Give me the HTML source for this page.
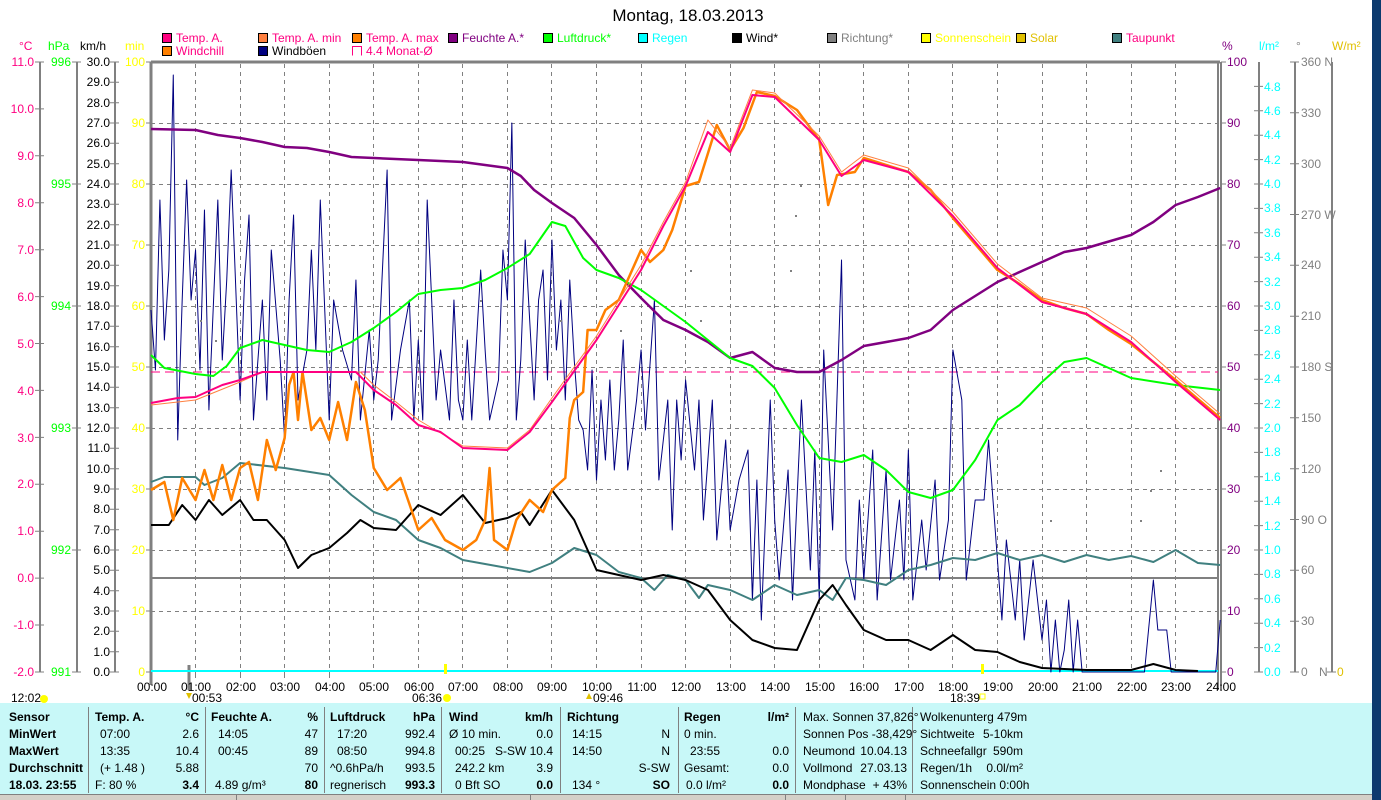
<!DOCTYPE html>
<html><head><meta charset="utf-8"><style>
html,body{margin:0;padding:0;background:#fff;width:1381px;height:800px;overflow:hidden}
svg{display:block}
text{font-family:"Liberation Sans Narrow","Liberation Sans",sans-serif;font-size:12px}
.b{font-weight:bold}
</style></head><body>
<svg width="1381" height="800" xmlns="http://www.w3.org/2000/svg">
<rect x="0" y="0" width="1381" height="800" fill="#fff"/>
<rect x="1372" y="0" width="9" height="800" fill="#0c3a6e"/>
<text x="688" y="21" text-anchor="middle" style="font-size:17px">Montag, 18.03.2013</text>

<!-- legend -->
<g stroke="#000" stroke-width="1">
<rect x="162.5" y="33.5" width="9" height="9" fill="#ff0080"/>
<rect x="258.5" y="33.5" width="9" height="9" fill="#ff8040"/>
<rect x="352.5" y="33.5" width="9" height="9" fill="#ff8000"/>
<rect x="448.5" y="33.5" width="9" height="9" fill="#800080"/>
<rect x="543.5" y="33.5" width="9" height="9" fill="#00ff00"/>
<rect x="638.5" y="33.5" width="9" height="9" fill="#00ffff"/>
<rect x="732.5" y="33.5" width="9" height="9" fill="#000"/>
<rect x="827.5" y="33.5" width="9" height="9" fill="#808080"/>
<rect x="921.5" y="33.5" width="9" height="9" fill="#ffff00"/>
<rect x="1016.5" y="33.5" width="9" height="9" fill="#e0c000"/>
<rect x="1112.5" y="33.5" width="9" height="9" fill="#408080"/>
<rect x="162.5" y="46.5" width="9" height="9" fill="#ff8000"/>
<rect x="258.5" y="46.5" width="9" height="9" fill="#000080"/>
</g>
<path d="M352.5 55.5V46.5H361.5V55.5" fill="none" stroke="#ff0080"/>
<g style="font-size:12px">
<text x="176" y="42" fill="#ff0080">Temp. A.</text>
<text x="272" y="42" fill="#ff0080">Temp. A. min</text>
<text x="366" y="42" fill="#ff0080">Temp. A. max</text>
<text x="462" y="42" fill="#800080">Feuchte A.*</text>
<text x="557" y="42" fill="#00ff00">Luftdruck*</text>
<text x="652" y="42" fill="#00ffff">Regen</text>
<text x="746" y="42" fill="#000">Wind*</text>
<text x="841" y="42" fill="#808080">Richtung*</text>
<text x="935" y="42" fill="#ffff00">Sonnenschein</text>
<text x="1030" y="42" fill="#e0c000">Solar</text>
<text x="1126" y="42" fill="#ff0080">Taupunkt</text>
<text x="176" y="55" fill="#ff0080">Windchill</text>
<text x="272" y="55" fill="#000">Windböen</text>
<text x="366" y="55" fill="#ff0080">4.4 Monat-Ø</text>
</g>
<!-- axis titles -->
<g style="font-size:12px">
<text x="19" y="50" fill="#ff0080">°C</text>
<text x="48" y="50" fill="#00ff00">hPa</text>
<text x="80" y="50" fill="#000">km/h</text>
<text x="125" y="50" fill="#ffff00">min</text>
<text x="1222" y="50" fill="#800080">%</text>
<text x="1259" y="50" fill="#00ffff">l/m²</text>
<text x="1296" y="50" fill="#808080">°</text>
<text x="1332" y="50" fill="#e0c000">W/m²</text>
</g>

<!-- grid -->
<g stroke="#808080" stroke-width="1" stroke-dasharray="4,4" fill="none">
<path d="M151 123.5H1218M151 184.5H1218M151 245.5H1218M151 306.5H1218M151 367.5H1218M151 428.5H1218M151 489.5H1218M151 550.5H1218M151 611.5H1218"/>
<path d="M195.5 64V672M240.5 64V672M284.5 64V672M329.5 64V672M373.5 64V672M418.5 64V672M462.5 64V672M507.5 64V672M551.5 64V672M596.5 64V672M641.5 64V672M685.5 64V672M730.5 64V672M774.5 64V672M819.5 64V672M863.5 64V672M908.5 64V672M952.5 64V672M997.5 64V672M1042.5 64V672M1086.5 64V672M1131.5 64V672M1175.5 64V672"/>
</g>
<!-- axes -->
<g stroke="#808080" fill="none">
<path d="M151 62H1220" stroke-width="3"/>
<path d="M151 62V685" stroke-width="3"/>
<path d="M1218 62V690M1221 62V690" stroke-width="2"/>
<path d="M40 62V672M77 62V672M115 62V672M1259 62V672M1295 62V672M1332 62V672" stroke-width="2"/>
<path d="M151 578H1218" stroke-width="2"/>
<path d="M189 665V690" stroke-width="3"/>
</g>
<path d="M151 372H1218" stroke="#ff0080" stroke-dasharray="9,5" stroke-width="1"/>
<rect x="151" y="670" width="1067" height="2" fill="#00ffff"/>

<!-- ticks -->
<g stroke="#808080" stroke-width="1">
<path d="M35 62H44M35 108.9H44M35 155.8H44M35 202.8H44M35 249.7H44M35 296.6H44M35 343.5H44M35 390.4H44M35 437.4H44M35 484.3H44M35 531.2H44M35 578.1H44M35 625H44M35 672H44"/>
<path d="M72 62H81M72 184H81M72 306H81M72 428H81M72 550H81M72 672H81"/>
<path d="M110 62H119M110 82.3H119M110 102.7H119M110 123H119M110 143.3H119M110 163.7H119M110 184H119M110 204.3H119M110 224.7H119M110 245H119M110 265.3H119M110 285.7H119M110 306H119M110 326.3H119M110 346.7H119M110 367H119M110 387.3H119M110 407.7H119M110 428H119M110 448.3H119M110 468.7H119M110 489H119M110 509.3H119M110 529.7H119M110 550H119M110 570.3H119M110 590.7H119M110 611H119M110 631.3H119M110 651.7H119M110 672H119"/>
<path d="M146 62H151M146 123H151M146 184H151M146 245H151M146 306H151M146 367H151M146 428H151M146 489H151M146 550H151M146 611H151M146 672H151"/>
<path d="M1221 62H1226M1221 123H1226M1221 184H1226M1221 245H1226M1221 306H1226M1221 367H1226M1221 428H1226M1221 489H1226M1221 550H1226M1221 611H1226M1221 672H1226"/>
<path d="M1254 86.4H1263M1254 110.8H1263M1254 135.2H1263M1254 159.6H1263M1254 184H1263M1254 208.4H1263M1254 232.8H1263M1254 257.2H1263M1254 281.6H1263M1254 306H1263M1254 330.4H1263M1254 354.8H1263M1254 379.2H1263M1254 403.6H1263M1254 428H1263M1254 452.4H1263M1254 476.8H1263M1254 501.2H1263M1254 525.6H1263M1254 550H1263M1254 574.4H1263M1254 598.8H1263M1254 623.2H1263M1254 647.6H1263M1254 672H1263"/>
<path d="M1290 62H1299M1290 112.8H1299M1290 163.7H1299M1290 214.5H1299M1290 265.3H1299M1290 316.2H1299M1290 367H1299M1290 417.8H1299M1290 468.7H1299M1290 519.5H1299M1290 570.3H1299M1290 621.2H1299M1290 672H1299"/>
<path d="M1327 672H1336M151 672V685M195.5 672V678M240.5 672V678M284.5 672V678M329.5 672V678"/>
</g>

<!-- left labels -->
<g fill="#ff0080" text-anchor="end">
<text x="34" y="66">11.0</text><text x="34" y="113">10.0</text><text x="34" y="160">9.0</text><text x="34" y="207">8.0</text><text x="34" y="254">7.0</text><text x="34" y="301">6.0</text><text x="34" y="348">5.0</text><text x="34" y="395">4.0</text><text x="34" y="442">3.0</text><text x="34" y="488">2.0</text><text x="34" y="535">1.0</text><text x="34" y="582">0.0</text><text x="34" y="629">-1.0</text><text x="34" y="676">-2.0</text>
</g>
<g fill="#00ff00" text-anchor="end">
<text x="71" y="66">996</text><text x="71" y="188">995</text><text x="71" y="310">994</text><text x="71" y="432">993</text><text x="71" y="554">992</text><text x="71" y="676">991</text>
</g>
<g fill="#000" text-anchor="end">
<text x="110" y="66">30.0</text><text x="110" y="86">29.0</text><text x="110" y="107">28.0</text><text x="110" y="127">27.0</text><text x="110" y="147">26.0</text><text x="110" y="168">25.0</text><text x="110" y="188">24.0</text><text x="110" y="208">23.0</text><text x="110" y="229">22.0</text><text x="110" y="249">21.0</text><text x="110" y="269">20.0</text><text x="110" y="290">19.0</text><text x="110" y="310">18.0</text><text x="110" y="330">17.0</text><text x="110" y="351">16.0</text><text x="110" y="371">15.0</text><text x="110" y="391">14.0</text><text x="110" y="412">13.0</text><text x="110" y="432">12.0</text><text x="110" y="452">11.0</text><text x="110" y="473">10.0</text><text x="110" y="493">9.0</text><text x="110" y="513">8.0</text><text x="110" y="534">7.0</text><text x="110" y="554">6.0</text><text x="110" y="574">5.0</text><text x="110" y="595">4.0</text><text x="110" y="615">3.0</text><text x="110" y="635">2.0</text><text x="110" y="656">1.0</text><text x="110" y="676">0.0</text>
</g>
<g fill="#ffff00" text-anchor="end">
<text x="145" y="66">100</text><text x="145" y="127">90</text><text x="145" y="188">80</text><text x="145" y="249">70</text><text x="145" y="310">60</text><text x="145" y="371">50</text><text x="145" y="432">40</text><text x="145" y="493">30</text><text x="145" y="554">20</text><text x="145" y="615">10</text><text x="145" y="676">0</text>
</g>
<!-- right labels -->
<g fill="#800080">
<text x="1227" y="66">100</text><text x="1227" y="127">90</text><text x="1227" y="188">80</text><text x="1227" y="249">70</text><text x="1227" y="310">60</text><text x="1227" y="371">50</text><text x="1227" y="432">40</text><text x="1227" y="493">30</text><text x="1227" y="554">20</text><text x="1227" y="615">10</text><text x="1227" y="676">0</text>
</g>
<g fill="#00ffff">
<text x="1264" y="91">4.8</text><text x="1264" y="115">4.6</text><text x="1264" y="139">4.4</text><text x="1264" y="164">4.2</text><text x="1264" y="188">4.0</text><text x="1264" y="212">3.8</text><text x="1264" y="237">3.6</text><text x="1264" y="261">3.4</text><text x="1264" y="286">3.2</text><text x="1264" y="310">3.0</text><text x="1264" y="334">2.8</text><text x="1264" y="359">2.6</text><text x="1264" y="383">2.4</text><text x="1264" y="408">2.2</text><text x="1264" y="432">2.0</text><text x="1264" y="456">1.8</text><text x="1264" y="481">1.6</text><text x="1264" y="505">1.4</text><text x="1264" y="530">1.2</text><text x="1264" y="554">1.0</text><text x="1264" y="578">0.8</text><text x="1264" y="603">0.6</text><text x="1264" y="627">0.4</text><text x="1264" y="652">0.2</text><text x="1264" y="676">0.0</text>
</g>
<g fill="#808080">
<text x="1301" y="66">360 N</text><text x="1301" y="117">330</text><text x="1301" y="168">300</text><text x="1301" y="219">270 W</text><text x="1301" y="269">240</text><text x="1301" y="320">210</text><text x="1301" y="371">180 S</text><text x="1301" y="422">150</text><text x="1301" y="473">120</text><text x="1301" y="524">90 O</text><text x="1301" y="574">60</text><text x="1301" y="625">30</text><text x="1301" y="676">0</text><text x="1319" y="676">N</text>
</g>
<text x="1337" y="676" fill="#e0c000">0</text>

<!-- time labels -->
<g fill="#000" text-anchor="middle">
<text x="152" y="691">00:00</text><text x="196" y="691">01:00</text><text x="241" y="691">02:00</text><text x="285" y="691">03:00</text><text x="330" y="691">04:00</text><text x="374" y="691">05:00</text><text x="419" y="691">06:00</text><text x="463" y="691">07:00</text><text x="508" y="691">08:00</text><text x="552" y="691">09:00</text><text x="597" y="691">10:00</text><text x="642" y="691">11:00</text><text x="686" y="691">12:00</text><text x="731" y="691">13:00</text><text x="775" y="691">14:00</text><text x="820" y="691">15:00</text><text x="864" y="691">16:00</text><text x="909" y="691">17:00</text><text x="953" y="691">18:00</text><text x="998" y="691">19:00</text><text x="1043" y="691">20:00</text><text x="1087" y="691">21:00</text><text x="1132" y="691">22:00</text><text x="1176" y="691">23:00</text><text x="1221" y="691">24:00</text>
</g>
<g fill="#000">
<text x="11" y="702">12:02</text><text x="192" y="702">00:53</text><text x="412" y="702">06:36</text><text x="593" y="702">09:46</text><text x="950" y="702">18:39</text>
</g>
<circle cx="44" cy="699" r="4" fill="#ffff00"/>
<circle cx="447" cy="698" r="4" fill="#ffff00"/>
<rect x="980" y="694" width="5" height="5" fill="none" stroke="#ffff00"/>
<path d="M186 693l3 6 3-6z" fill="#e0c000"/>
<path d="M586 699l3-6 3 6z" fill="#e0c000"/>
<rect x="444" y="664" width="3" height="10" fill="#ffff00"/>
<rect x="981" y="664" width="3" height="10" fill="#ffff00"/>

<!-- data curves: x in hours -->
<g transform="translate(151,0) scale(44.55,1)" fill="none" stroke-linejoin="round">
<polyline vector-effect="non-scaling-stroke" stroke="#000080" stroke-width="1" points="0,310 0.1,370 0.2,200 0.3,340 0.4,270 0.5,75 0.6,440 0.7,300 0.8,180 0.9,300 1,250 1.1,370 1.2,210 1.3,410 1.5,200 1.6,360 1.7,280 1.8,170 2,400 2.1,280 2.2,215 2.3,420 2.5,300 2.6,400 2.7,250 2.9,360 3,440 3.1,300 3.2,215 3.3,400 3.5,350 3.6,250 3.7,350 3.8,200 4,420 4.1,300 4.3,350 4.5,380 4.6,280 4.7,420 4.9,330 5,400 5.1,360 5.3,170 5.4,420 5.6,350 5.8,300 5.9,420 6,340 6.1,420 6.2,200 6.4,400 6.5,350 6.7,420 6.8,300 6.9,400 7,420 7.1,340 7.2,420 7.4,270 7.5,350 7.6,420 7.8,380 7.9,250 8,300 8.1,123 8.2,420 8.3,360 8.4,240 8.6,400 8.7,300 8.8,270 8.9,380 9,240 9.1,350 9.2,300 9.3,400 9.4,280 9.5,360 9.6,420 9.7,430 9.8,470 9.9,370 10,480 10.1,400 10.2,460 10.3,380 10.4,470 10.5,420 10.6,340 10.7,470 10.9,400 11,350 11.1,430 11.3,300 11.4,480 11.6,400 11.7,530 11.8,400 11.9,460 12,380 12.2,470 12.3,400 12.4,520 12.6,400 12.7,540 12.9,440 13,530 13.2,480 13.4,450 13.5,600 13.6,480 13.7,620 13.9,400 14,520 14.1,580 14.3,470 14.4,600 14.6,400 14.8,570 14.9,450 15,600 15.1,350 15.3,530 15.5,260 15.6,560 15.8,600 15.9,500 16,580 16.2,450 16.3,600 16.5,470 16.6,580 16.8,500 16.9,580 17,450 17.1,600 17.3,520 17.4,570 17.6,480 17.7,580 17.9,520 18,350 18.2,400 18.3,580 18.5,500 18.7,500 18.8,440 19,560 19.1,620 19.2,540 19.4,620 19.5,560 19.6,640 19.8,560 20,640 20.1,600 20.2,672 20.3,620 20.4,672 20.5,650 20.6,600 20.7,672 20.8,620 20.9,672 22.3,672 22.5,580 22.6,630 22.8,630 22.9,672 23.9,672 24,620"/>
<polyline vector-effect="non-scaling-stroke" stroke="#408080" stroke-width="2" points="0,482 0.3,477 1,477 1.2,485 1.6,478 2,463 3,468 4,475 4.5,495 5,512 5.5,520 6,540 6.5,548 7,560 8,568 8.5,572 9,563 9.5,548 10,555 10.5,572 11,578 11.3,590 11.6,575 12,580 12.3,598 12.5,585 13,590 13.5,600 14,585 14.5,595 15,590 15.3,600 15.6,578 16,580 16.5,585 17,570 17.5,565 18,558 18.5,560 19,553 19.5,560 20,555 20.5,562 21,555 21.5,560 22,556 22.5,562 23,550 23.5,563 24,565"/>
<polyline vector-effect="non-scaling-stroke" stroke="#000" stroke-width="2" points="0,525 0.4,525 0.7,505 1,520 1.3,500 1.6,515 2,500 2.3,520 2.6,520 3,540 3.3,568 3.6,555 4,548 4.4,533 4.7,520 5,528 5.5,530 6,505 6.5,515 7,495 7.5,523 8,518 8.3,512 8.5,525 9,490 9.5,520 10,570 10.5,575 11,580 11.5,575 12,580 12.5,590 13,620 13.5,640 14,648 14.5,650 15,600 15.3,585 15.6,605 16,630 16.5,640 17,640 17.5,650 18,635 18.5,650 19,652 19.5,662 20,668 21,670 22,670 22.5,664 23,670 23.5,671"/>
<polyline vector-effect="non-scaling-stroke" stroke="#800080" stroke-width="2.5" points="0,129 1,130 1.5,135 2,138 2.5,142 3,147 3.5,148 4,152 4.5,157 5,158 6,160 7,162 8,168 8.3,176 8.6,190 9,203 9.5,218 10,245 10.5,275 11,298 11.5,320 12,330 12.5,342 13,358 13.5,352 14,368 14.5,372 15,372 15.5,360 16,346 17,338 17.5,330 18,310 19,282 20,262 20.5,252 21,248 22,235 22.5,222 23,205 23.5,197 24,188"/>
<polyline vector-effect="non-scaling-stroke" stroke="#00ff00" stroke-width="2" points="0,355 0.3,368 1,374 1.4,376 1.7,366 2,348 2.5,340 3,345 3.5,350 4,352 4.5,342 5,328 5.5,312 6,294 6.5,290 7,288 7.5,280 8,268 8.5,254 9,222 9.3,226 9.7,258 10,270 10.5,278 11,290 11.5,306 12,322 12.5,340 13,358 13.5,366 14,388 14.5,425 15,458 15.5,462 16,455 16.5,470 17,492 17.5,498 18,490 18.5,460 19,420 19.5,405 20,382 20.5,362 21,358 21.5,368 22,378 23,385 24,390"/>
<polyline vector-effect="non-scaling-stroke" stroke="#ff8000" stroke-width="2.5" points="0,490 0.3,482 0.5,520 0.7,478 1,500 1.2,470 1.4,500 1.6,465 1.8,500 2,468 2.2,462 2.4,500 2.6,440 2.8,470 3,438 3.1,385 3.2,372 3.3,420 3.4,372 3.6,430 3.8,418 4,440 4.2,402 4.4,440 4.6,382 4.8,410 5,468 5.3,490 5.6,478 6,530 6.3,518 6.6,540 7,550 7.3,540 7.5,520 7.6,468 7.7,540 8,550 8.2,520 8.5,500 8.8,512 9,490 9.3,478 9.4,418 9.5,400 9.7,392 9.8,330 10,330 10.2,310 10.5,300 10.7,280 11,250 11.2,262 11.5,250 11.7,230 12,186 12.3,182 12.7,125 13,150 13.3,128 13.6,92 14,96 14.5,110 15,140 15.2,205 15.4,175 15.8,172 16,158 16.5,165 17,172 17.5,190 18,218 18.5,244 19,270 19.5,284 20,300 20.5,308 21,314 21.5,330 22,344 23,380 24,418"/>
<polyline vector-effect="non-scaling-stroke" stroke="#ff8040" stroke-width="1" points="0,405 1,400 2,382 2.5,372 4.7,372 5,385 5.5,402 6,420 7,446 8,448 8.5,430 9,398 10,336 11,265 11.5,222 12,182 12.5,120 13,148 13.5,90 14,93 15,136 15.5,172 16,155 17,168 18,212 19,264 20,298 21,308 22,336 23,376 24,414"/>
<polyline vector-effect="non-scaling-stroke" stroke="#ff0080" stroke-width="2" points="0,403 0.6,398 1,397 1.2,393 1.6,385 2,380 2.5,372 4.6,372 5,390 5.5,405 6,425 6.5,432 7,448 8,450 8.5,432 9,402 10,340 11,270 11.5,226 12,186 12.5,132 13,152 13.5,95 14,97 15,140 15.5,176 16,160 17,172 18,216 19,268 20,302 21,314 22,342 23,382 24,420"/>
</g>
<!-- direction dots -->
<g fill="#808080">
<rect x="200" y="320" width="2" height="2"/><rect x="215" y="340" width="2" height="2"/><rect x="340" y="350" width="2" height="2"/><rect x="420" y="330" width="2" height="2"/><rect x="480" y="300" width="2" height="2"/><rect x="560" y="320" width="2" height="2"/><rect x="620" y="330" width="2" height="2"/><rect x="690" y="270" width="2" height="2"/><rect x="700" y="320" width="2" height="2"/><rect x="795" y="215" width="2" height="2"/><rect x="800" y="185" width="2" height="2"/><rect x="790" y="270" width="2" height="2"/><rect x="1140" y="520" width="2" height="2"/><rect x="1150" y="490" width="2" height="2"/><rect x="1160" y="470" width="2" height="2"/><rect x="1050" y="520" width="2" height="2"/>
</g>

<!-- bottom table -->
<rect x="0" y="703" width="1372" height="91" fill="#c8f8f8"/>
<g stroke="#808080" stroke-width="1">
<path d="M88.5 707V793M205.5 707V793M324.5 707V793M441.5 707V793M560.5 707V793M678.5 707V793M795.5 707V793M912.5 707V793"/>
</g>
<rect x="0" y="794" width="1372" height="6" fill="#d4d0c8"/>
<path d="M0 794.5H1372" stroke="#808080"/>
<g stroke="#808080"><path d="M236.5 795V800M530.5 795V800M785.5 795V800M845.5 795V800M905.5 795V800"/></g>
<g style="font-size:12px">
<g class="b"><text x="9" y="721">Sensor</text><text x="9" y="738">MinWert</text><text x="9" y="755">MaxWert</text><text x="9" y="772">Durchschnitt</text><text x="9" y="789">18.03. 23:55</text>
<text x="95" y="721">Temp. A.</text><text x="199" y="721" text-anchor="end">°C</text>
<text x="211" y="721">Feuchte A.</text><text x="318" y="721" text-anchor="end">%</text>
<text x="330" y="721">Luftdruck</text><text x="435" y="721" text-anchor="end">hPa</text>
<text x="449" y="721">Wind</text><text x="553" y="721" text-anchor="end">km/h</text>
<text x="567" y="721">Richtung</text>
<text x="684" y="721">Regen</text><text x="789" y="721" text-anchor="end">l/m²</text>
<text x="199" y="789" text-anchor="end">3.4</text><text x="318" y="789" text-anchor="end">80</text><text x="435" y="789" text-anchor="end">993.3</text><text x="553" y="789" text-anchor="end">0.0</text><text x="670" y="789" text-anchor="end">SO</text><text x="789" y="789" text-anchor="end">0.0</text></g>
<text x="100" y="738">07:00</text><text x="199" y="738" text-anchor="end">2.6</text>
<text x="100" y="755">13:35</text><text x="199" y="755" text-anchor="end">10.4</text>
<text x="100" y="772">(+ 1.48 )</text><text x="199" y="772" text-anchor="end">5.88</text>
<text x="95" y="789">F: 80 %</text>
<text x="218" y="738">14:05</text><text x="318" y="738" text-anchor="end">47</text>
<text x="218" y="755">00:45</text><text x="318" y="755" text-anchor="end">89</text>
<text x="318" y="772" text-anchor="end">70</text>
<text x="215" y="789">4.89 g/m³</text>
<text x="337" y="738">17:20</text><text x="435" y="738" text-anchor="end">992.4</text>
<text x="337" y="755">08:50</text><text x="435" y="755" text-anchor="end">994.8</text>
<text x="330" y="772">^0.6hPa/h</text><text x="435" y="772" text-anchor="end">993.5</text>
<text x="330" y="789">regnerisch</text>
<text x="449" y="738">Ø 10 min.</text><text x="553" y="738" text-anchor="end">0.0</text>
<text x="455" y="755">00:25</text><text x="553" y="755" text-anchor="end">S-SW 10.4</text>
<text x="455" y="772">242.2 km</text><text x="553" y="772" text-anchor="end">3.9</text>
<text x="455" y="789">0 Bft SO</text>
<text x="572" y="738">14:15</text><text x="670" y="738" text-anchor="end">N</text>
<text x="572" y="755">14:50</text><text x="670" y="755" text-anchor="end">N</text>
<text x="670" y="772" text-anchor="end">S-SW</text>
<text x="572" y="789">134 °</text>
<text x="684" y="738">0 min.</text>
<text x="690" y="755">23:55</text><text x="789" y="755" text-anchor="end">0.0</text>
<text x="684" y="772">Gesamt:</text><text x="789" y="772" text-anchor="end">0.0</text>
<text x="686" y="789">0.0 l/m²</text>
<text x="803" y="721">Max. Sonnen 37,826°</text>
<text x="803" y="738">Sonnen Pos  -38,429°</text>
<text x="803" y="755">Neumond</text><text x="907" y="755" text-anchor="end">10.04.13</text>
<text x="803" y="772">Vollmond</text><text x="907" y="772" text-anchor="end">27.03.13</text>
<text x="803" y="789">Mondphase</text><text x="907" y="789" text-anchor="end">+ 43%</text>
<text x="920" y="721">Wolkenunterg   479m</text>
<text x="920" y="738">Sichtweite</text><text x="1023" y="738" text-anchor="end">5-10km</text>
<text x="920" y="755">Schneefallgr</text><text x="1023" y="755" text-anchor="end">590m</text>
<text x="920" y="772">Regen/1h</text><text x="1023" y="772" text-anchor="end">0.0l/m²</text>
<text x="920" y="789">Sonnenschein  0:00h</text>
</g>
</svg>
</body></html>
